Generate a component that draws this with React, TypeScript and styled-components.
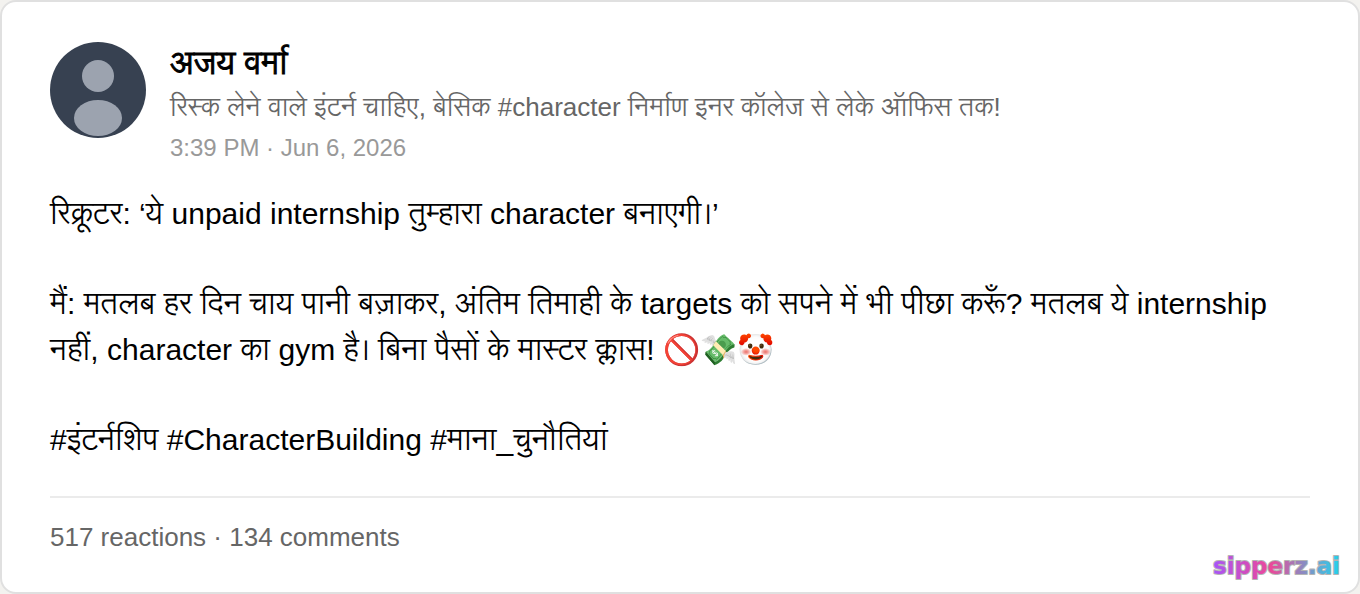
import React from "react";
import styled, { createGlobalStyle } from "styled-components";

const Global = createGlobalStyle`
  * { box-sizing: border-box; }
  body { margin: 0; background: #f3f2ef; font-family: "Liberation Sans", "Lohit Devanagari", Arial, sans-serif; color: #000; }
`;
const Card = styled.article`
  position: relative;
  padding: 40px 48px;
  background: #fff;
  border: 2px solid #e0e0e0;
  border-radius: 16px;
`;
const Header = styled.header`
  display: flex;
  gap: 24px;
  margin-bottom: 25px;
`;
const Avatar = styled.svg`
  flex: none;
  width: 96px;
  height: 96px;
`;
const Name = styled.h1`
  margin: 0;
  font-size: 32px;
  line-height: 42px;
  font-weight: 600;
  -webkit-text-stroke: 1px currentColor;
`;
const Headline = styled.p`
  margin: 4px 0;
  font-size: 26px;
  line-height: 38px;
  color: #666;
`;
const Time = styled.time`
  display: block;
  font-size: 24px;
  line-height: 36px;
  color: #999;
`;
const Post = styled.div`
  display: grid;
  gap: 44px;
  font-size: 30px;
  line-height: 46px;
`;
const Paragraph = styled.p`
  margin: 0;
`;
const Stats = styled.footer`
  margin-top: 33px;
  padding-top: 24px;
  border-top: 2px solid #ebebeb;
  font-size: 26px;
  line-height: 30px;
  color: #666;
`;
const Brand = styled.svg`
  position: absolute;
  right: 18px;
  bottom: 12px;
  width: 128px;
  height: 28px;
  overflow: visible;
  font: bold 23px "DejaVu Sans", sans-serif;
`;

export default function App() {
  return (
    <>
      <Global />
      <Card>
        <Header>
          <Avatar viewBox="0 0 96 96" role="img" aria-label="अजय वर्मा">
            <defs><clipPath id="face"><circle cx="48" cy="48" r="48" /></clipPath></defs>
            <circle cx="48" cy="48" r="48" fill="#374151" />
            <g fill="#9ca3af" clipPath="url(#face)">
              <circle cx="48" cy="34" r="16" />
              <ellipse cx="48" cy="76" rx="24" ry="18" />
            </g>
          </Avatar>
          <div>
            <Name>अजय वर्मा</Name>
            <Headline>रिस्क लेने वाले इंटर्न चाहिए, बेसिक #character निर्माण इनर कॉलेज से लेके ऑफिस तक!</Headline>
            <Time dateTime="2026-06-06T15:39">3:39 PM · Jun 6, 2026</Time>
          </div>
        </Header>
        <Post>
          <Paragraph>रिक्रूटर: ‘ये unpaid internship तुम्हारा character बनाएगी।’</Paragraph>
          <Paragraph>मैं: मतलब हर दिन चाय पानी बज़ाकर, अंतिम तिमाही के targets को सपने में भी पीछा करूँ? मतलब ये internship नहीं, character का gym है। बिना पैसों के मास्टर क्लास! 🚫💸🤡</Paragraph>
          <Paragraph>#इंटर्नशिप #CharacterBuilding #माना_चुनौतियां</Paragraph>
        </Post>
        <Stats>517 reactions · 134 comments</Stats>
        <Brand viewBox="0 0 128 28">
          <defs>
            <linearGradient id="brand">
              <stop offset="0" stopColor="#a855f7" />
              <stop offset="0.45" stopColor="#ec4899" />
              <stop offset="1" stopColor="#22d3ee" />
            </linearGradient>
          </defs>
          <text x="128" y="22" textAnchor="end" fill="url(#brand)" stroke="#b4b4b4" strokeWidth="2" strokeLinejoin="round" paintOrder="stroke">sipperz.ai</text>
        </Brand>
      </Card>
    </>
  );
}
